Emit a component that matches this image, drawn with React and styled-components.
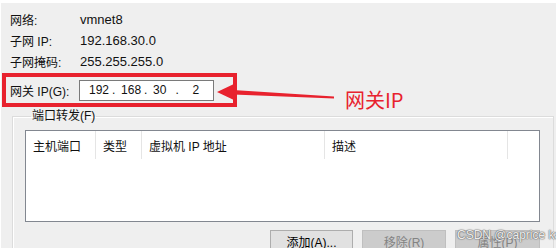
import React from "react";
import styled, { createGlobalStyle } from "styled-components";

const GlobalStyle = createGlobalStyle`
    body {
        margin: 0;
        background: #ffffff;
        font-family: "Liberation Sans", "Noto Sans CJK SC", sans-serif;
        font-size: 12px;
        color: #111111;
    }
`;

const infoRows = [
    { label: "网络:", value: "vmnet8" },
    { label: "子网 IP:", value: "192.168.30.0" },
    { label: "子网掩码:", value: "255.255.255.0" },
];

const columns = [
    { title: "主机端口", width: 70 },
    { title: "类型", width: 46 },
    { title: "虚拟机 IP 地址", width: 183 },
    { title: "描述", width: 183 },
];

// the IP control centres each octet in its own slot, so the dots sit unevenly
const octets = [
    { text: "192", dot: { pad: 3, width: 12 } },
    { text: "168", dot: { pad: 3, width: 12 } },
    { text: "30", dot: { pad: 9, width: 26 } },
    { text: "2" },
];

export default function App() {
    return (
        <>
            <GlobalStyle />
            <Window>
                <Info>
                    {infoRows.map((row) => (
                        <InfoRow key={row.label}>
                            <Label>{row.label}</Label>
                            <Value>{row.value}</Value>
                        </InfoRow>
                    ))}
                </Info>
                <GatewayBox>
                    <Label>网关 IP(G):</Label>
                    <IpField>
                        {octets.map((octet, index) => (
                            <React.Fragment key={index}>
                                <span>{octet.text}</span>
                                {octet.dot && (
                                    <Dot
                                        $pad={octet.dot.pad}
                                        $width={octet.dot.width}
                                    >
                                        .
                                    </Dot>
                                )}
                            </React.Fragment>
                        ))}
                    </IpField>
                </GatewayBox>
                <Arrow width="125" height="25" viewBox="0 0 125 25">
                    <polygon
                        points="2,12 21,3 18,10 119,16.5 119,18.5 18,14.5 21,21"
                        fill="#e8222e"
                    />
                </Arrow>
                <Annotation>网关IP</Annotation>
                <Group>
                    <Legend>端口转发(F)</Legend>
                    <ListBox>
                        <ListHeader>
                            {columns.map((col) => (
                                <HeaderCell key={col.title} $width={col.width}>
                                    {col.title}
                                </HeaderCell>
                            ))}
                            <HeaderFiller />
                        </ListHeader>
                    </ListBox>
                    <ButtonRow>
                        <Button $width={83}>添加(A)...</Button>
                        <Button $width={84} disabled>
                            移除(R)
                        </Button>
                        <Button $width={85} disabled>
                            属性(P)
                        </Button>
                    </ButtonRow>
                </Group>
                <Watermark>CSDN @caprice kay</Watermark>
            </Window>
        </>
    );
}

const Window = styled.div`
    position: relative;
    margin: 3px 0 0 1px;
    width: 555px;
    height: 245px;
    background: #efefef;
    overflow: hidden;
`;

const Info = styled.div`
    display: flex;
    flex-direction: column;
    padding: 6px 0 0 9px;
`;

const InfoRow = styled.div`
    display: flex;
    align-items: center;
    height: 21px;
`;

const Label = styled.span`
    width: 70px;
    flex-shrink: 0;
    white-space: nowrap;
`;

const Value = styled.span`
    font-size: 13px;
`;

const GatewayBox = styled.div`
    display: flex;
    align-items: center;
    width: 235px;
    height: 34px;
    margin: 1px 0 0 1px;
    padding-left: 4px;
    box-sizing: border-box;
    border: 4px solid #e8222e;
    ${Label} {
        width: 69px;
    }
`;

const IpField = styled.div`
    display: flex;
    align-items: center;
    width: 135px;
    height: 21px;
    box-sizing: border-box;
    border: 1px solid #7a7a7a;
    background: #ffffff;
    padding-left: 9px;
    font-size: 12px;
    white-space: nowrap;
`;

const Dot = styled.span`
    display: inline-block;
    flex-shrink: 0;
    box-sizing: border-box;
    padding-left: ${(props) => props.$pad}px;
    width: ${(props) => props.$width}px;
`;

const Arrow = styled.svg`
    position: absolute;
    left: 214px;
    top: 77px;
`;

const Annotation = styled.span`
    position: absolute;
    left: 344px;
    top: 84px;
    font-family: "Noto Sans CJK SC", sans-serif;
    font-size: 20px;
    line-height: 26px;
    color: #e8222e;
`;

const Group = styled.fieldset`
    margin: 1px 0 0 11px;
    width: 542px;
    height: 160px;
    box-sizing: border-box;
    padding: 6px 13px 0 12px;
    border: 1px solid #dcdcdc;
    box-shadow: inset 1px 1px 0 #ffffff;
`;

const Legend = styled.legend`
    padding: 0 1px;
    margin-left: 6px;
    line-height: 16px;
`;

const ListBox = styled.div`
    height: 92px;
    box-sizing: border-box;
    border: 1px solid #828790;
    background: #ffffff;
`;

const ListHeader = styled.div`
    display: flex;
    height: 28px;
`;

const HeaderCell = styled.div`
    width: ${(props) => props.$width}px;
    box-sizing: border-box;
    padding-left: 7px;
    border-right: 1px solid #e5e5e5;
    display: flex;
    align-items: center;
    white-space: nowrap;
`;

const HeaderFiller = styled.div`
    flex: 1;
`;

const ButtonRow = styled.div`
    display: flex;
    justify-content: flex-end;
    gap: 9px;
    margin-top: 8px;
`;

const Button = styled.button`
    width: ${(props) => props.$width}px;
    height: 23px;
    font-family: inherit;
    font-size: 12px;
    padding: 0;
    border: 1px solid ${(props) => (props.disabled ? "#bfbfbf" : "#adadad")};
    background: ${(props) => (props.disabled ? "#cccccc" : "#e1e1e1")};
    color: ${(props) => (props.disabled ? "#838383" : "#000000")};
`;

const Watermark = styled.span`
    position: absolute;
    left: 456px;
    top: 225px;
    font-size: 12px;
    color: rgba(255, 255, 255, 0.9);
    text-shadow: 0 0 1px #666666, 0 0 1px #666666, 0 0 2px #888888;
    white-space: nowrap;
`;
